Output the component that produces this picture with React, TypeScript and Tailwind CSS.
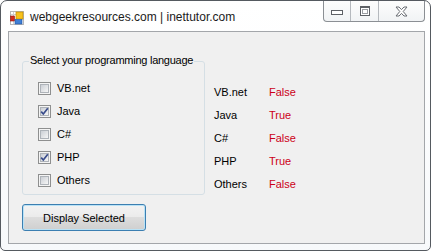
import React from "react";

const langs = [
  { name: "VB.net", checked: false },
  { name: "Java", checked: true },
  { name: "C#", checked: false },
  { name: "PHP", checked: true },
  { name: "Others", checked: false },
];

function FormIcon() {
  return (
    <svg width="14" height="14" viewBox="0 0 14 14">
      <rect x="0.5" y="0.5" width="13" height="13" fill="#ffffff" stroke="#b8b8b8" />
      <line x1="3.5" y1="1" x2="3.5" y2="13" stroke="#d0d0d0" />
      <line x1="1" y1="3.5" x2="13" y2="3.5" stroke="#d0d0d0" />
      <rect x="0.5" y="5" width="4" height="5" fill="#d42a1e" stroke="#8c1a12" strokeWidth="0.6" />
      <rect x="6" y="1" width="7" height="7" fill="#f7c21c" stroke="#c08a00" strokeWidth="0.7" />
      <rect x="5" y="8.5" width="7" height="4.5" fill="#3e7fd6" stroke="#1f4f9a" strokeWidth="0.6" />
    </svg>
  );
}

function CheckBox({ checked }: { checked: boolean }) {
  return (
    <div className="w-[13px] h-[13px] border border-[#8e8f8f] bg-[#f4f4f4] p-[1px] shrink-0">
      <div className="relative w-full h-full border border-[#aeb3b9] bg-[linear-gradient(135deg,#cbcfd5_0%,#f6f6f6_100%)]">
        {checked && (
          <svg
            className="absolute left-[-1px] top-[-1px]"
            width="9"
            height="9"
            viewBox="0 0 9 9"
          >
            <path
              d="M1.2 4.6 L3.3 7 L7.8 1.2"
              fill="none"
              stroke="#3a4d8c"
              strokeWidth="1.7"
              strokeLinejoin="miter"
            />
          </svg>
        )}
      </div>
    </div>
  );
}

export default function App() {
  return (
    <div className="w-[433px] h-[252px] bg-white font-['Liberation_Sans',Arial,sans-serif]">
      <div className="w-[431px] h-[251px] border border-[#555a60] rounded-t-[7px] rounded-b-[5px] bg-[linear-gradient(to_bottom,#ffffff_0%,#f7f9fb_100%)] flex flex-col">
        {/* title bar */}
        <div className="h-[30px] flex items-start shrink-0">
          <div className="ml-[9px] mt-[10px]">
            <FormIcon />
          </div>
          <div className="ml-[6px] mt-[8px] text-[12px] leading-[16px] text-[#1b1b1b]">
            webgeekresources.com | inettutor.com
          </div>
          <div className="ml-auto mr-[5px] flex h-[21px] border border-t-0 border-[#8b8f94] rounded-b-[4px] bg-[linear-gradient(to_bottom,#fdfdfd,#f1f3f5)]">
            <div className="w-[27px] flex items-center justify-center border-r border-[#b5b9be]">
              <div className="w-[12px] h-[5px] border border-[#5e6166] bg-white mt-[3px]" />
            </div>
            <div className="w-[28px] flex items-center justify-center border-r border-[#b5b9be]">
              <div className="w-[10px] h-[10px] border border-[#5e6166] border-t-[2px] bg-white p-[1px]">
                <div className="w-full h-full border border-[#9a9da2]" />
              </div>
            </div>
            <div className="w-[45px] flex items-center justify-center">
              <svg width="13" height="11" viewBox="0 0 13 11">
                <path
                  d="M1 1 L4 1 L6.5 3.6 L9 1 L12 1 L8.2 5.5 L12 10 L9 10 L6.5 7.4 L4 10 L1 10 L4.8 5.5 Z"
                  fill="#ffffff"
                  stroke="#686c72"
                  strokeWidth="1"
                />
              </svg>
            </div>
          </div>
        </div>

        {/* client area */}
        <div className="flex-1 ml-[7px] mr-[5px] mb-[6px] border border-[#a3a6aa] bg-[#f0f0f0] pl-[13px] text-[11px] text-black">
          <div className="flex">
            <div className="relative mt-[29px] w-[183px] h-[134px] border border-[#d5dfe5] rounded-[3px]">
              <span className="absolute left-[6px] top-[-8px] px-[1px] leading-[13px] tracking-[-0.25px] bg-[#f0f0f0]">
                Select your programming language
              </span>
              <div className="flex flex-col pt-[20px] pl-[15px]">
                {langs.map((l) => (
                  <div key={l.name} className="h-[23px] flex items-start">
                    <CheckBox checked={l.checked} />
                    <span className="ml-[6px] leading-[13px]">{l.name}</span>
                  </div>
                ))}
              </div>
            </div>
            <div className="ml-[9px] mt-[49px] grid grid-cols-[55px_auto] leading-[23px]">
              {langs.map((l) => (
                <React.Fragment key={l.name}>
                  <span>{l.name}</span>
                  <span className="text-[#cc0018]">{l.checked ? "True" : "False"}</span>
                </React.Fragment>
              ))}
            </div>
          </div>
          <button className="mt-[8px] w-[124px] h-[27px] rounded-[3px] border border-[#3c7fb1] shadow-[inset_0_0_0_1px_#b9e2f6] bg-[linear-gradient(to_bottom,#f3f3f3_0%,#ebebeb_50%,#dddddd_50%,#cfcfcf_100%)] text-[11px] leading-[14px] text-black">
            Display Selected
          </button>
        </div>
      </div>
    </div>
  );
}
